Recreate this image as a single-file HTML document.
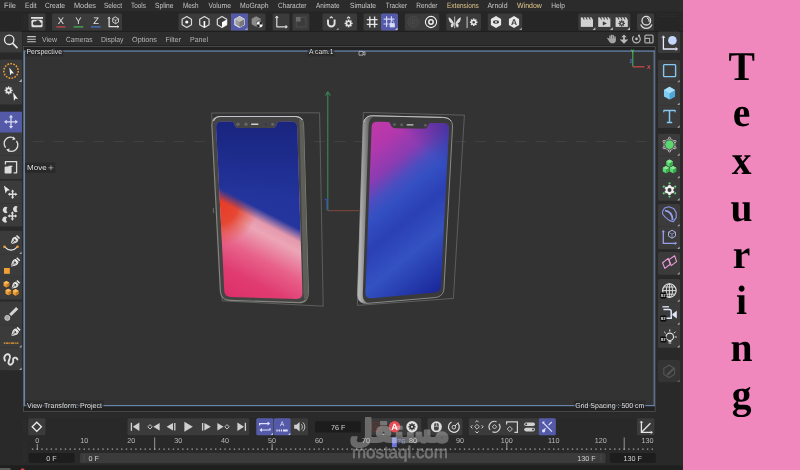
<!DOCTYPE html>
<html><head><meta charset="utf-8"><title>Texuring</title>
<style>
html,body{margin:0;padding:0;background:#292929;overflow:hidden}
svg{display:block;font-family:"Liberation Sans",sans-serif;will-change:transform;text-rendering:geometricPrecision}
.m{font-size:7.6px;fill:#c6c6c6}
.v{font-size:7.4px;fill:#b4b4b4}
.h{font-size:7.3px;fill:#e2e2e2;stroke:#1c1c1c;stroke-width:1.1px;paint-order:stroke;stroke-linejoin:round}
.t{font-size:7.2px;fill:#b8b8b8;text-anchor:middle}
.f{font-size:7.2px;fill:#d0d0d0;text-anchor:middle}
.xyz{font-size:9.4px;fill:#e6e6e6;text-anchor:middle}
.big{font-family:"Liberation Serif",serif;font-weight:bold;font-size:41px;fill:#000;text-anchor:middle}
.s{fill:none;stroke:#dcdcdc;stroke-width:1.2;stroke-linecap:round;stroke-linejoin:round}
</style></head><body>
<svg width="800" height="470" viewBox="0 0 800 470">
<!-- base -->
<rect x="0" y="0" width="683" height="470" fill="#292929"/>
<rect x="0" y="0" width="683" height="11.5" fill="#2b2b2b"/>
<rect x="0" y="11.5" width="683" height="19.6" fill="#262626"/>
<rect x="0" y="31" width="683" height="1" fill="#1f1f1f"/>
<rect x="683" y="0" width="117" height="470" fill="#f088be"/>
<g class="m">
<text x="4" y="7.6" textLength="12" lengthAdjust="spacingAndGlyphs">File</text>
<text x="25" y="7.6" textLength="11.5" lengthAdjust="spacingAndGlyphs">Edit</text>
<text x="45" y="7.6" textLength="20" lengthAdjust="spacingAndGlyphs">Create</text>
<text x="74" y="7.6" textLength="22" lengthAdjust="spacingAndGlyphs">Modes</text>
<text x="104" y="7.6" textLength="18" lengthAdjust="spacingAndGlyphs">Select</text>
<text x="131" y="7.6" textLength="15" lengthAdjust="spacingAndGlyphs">Tools</text>
<text x="155" y="7.6" textLength="18.5" lengthAdjust="spacingAndGlyphs">Spline</text>
<text x="183" y="7.6" textLength="15.5" lengthAdjust="spacingAndGlyphs">Mesh</text>
<text x="208.5" y="7.6" textLength="22.5" lengthAdjust="spacingAndGlyphs">Volume</text>
<text x="240" y="7.6" textLength="28.5" lengthAdjust="spacingAndGlyphs">MoGraph</text>
<text x="278" y="7.6" textLength="28.5" lengthAdjust="spacingAndGlyphs">Character</text>
<text x="316" y="7.6" textLength="23.5" lengthAdjust="spacingAndGlyphs">Animate</text>
<text x="350" y="7.6" textLength="26" lengthAdjust="spacingAndGlyphs">Simulate</text>
<text x="385.8" y="7.6" textLength="21.2" lengthAdjust="spacingAndGlyphs">Tracker</text>
<text x="416.3" y="7.6" textLength="21.2" lengthAdjust="spacingAndGlyphs">Render</text>
<text x="447" y="7.6" textLength="31.8" lengthAdjust="spacingAndGlyphs" fill="#e3c68c">Extensions</text>
<text x="487.5" y="7.6" textLength="20" lengthAdjust="spacingAndGlyphs">Arnold</text>
<text x="517" y="7.6" textLength="24.8" lengthAdjust="spacingAndGlyphs" fill="#e3c68c">Window</text>
<text x="551.3" y="7.6" textLength="13.7" lengthAdjust="spacingAndGlyphs">Help</text>
</g>
<!-- toolbar -->
<path d="M22.5 14V30" stroke="#333" stroke-width="0.8" stroke-dasharray="0.8 0.8"/>
<path d="M24.5 14V30" stroke="#333" stroke-width="0.8" stroke-dasharray="0.8 0.8"/>
<path d="M26.5 14V30" stroke="#333" stroke-width="0.8" stroke-dasharray="0.8 0.8"/>
<rect x="28.3" y="13.5" width="17.2" height="17" fill="#3b3b3b" rx="1.5"/>
<rect x="52" y="13.5" width="70" height="17" fill="#3b3b3b" rx="1.5"/>
<rect x="178.5" y="13.5" width="87" height="17" fill="#3b3b3b" rx="1.5"/>
<rect x="231" y="13.5" width="17" height="17" fill="#545aa8"/>
<rect x="272.6" y="13.5" width="16.9" height="17" fill="#3b3b3b" rx="1.5"/>
<rect x="292.5" y="13.5" width="16.8" height="17" fill="#3b3b3b" rx="1.5"/>
<rect x="322.5" y="13.5" width="34.5" height="17" fill="#3b3b3b" rx="1.5"/>
<rect x="363.5" y="13.5" width="34.5" height="17" fill="#3b3b3b" rx="1.5"/>
<rect x="381" y="13.5" width="17" height="17" fill="#545aa8" rx="1.5"/>
<rect x="404.8" y="13.5" width="34.5" height="17" fill="#3b3b3b" rx="1.5"/>
<rect x="446.2" y="13.5" width="34.8" height="17" fill="#3b3b3b" rx="1.5"/>
<rect x="487.7" y="13.5" width="34.6" height="17" fill="#3b3b3b" rx="1.5"/>
<rect x="578.3" y="13.5" width="52.1" height="17" fill="#3b3b3b" rx="1.5"/>
<rect x="637" y="13.5" width="17" height="17" fill="#3b3b3b" rx="1.5"/>
<path d="M659 14.5H678" stroke="#333" stroke-width="0.8" stroke-dasharray="0.8 0.8"/>
<path d="M659 16.5H678" stroke="#333" stroke-width="0.8" stroke-dasharray="0.8 0.8"/>
<g transform="translate(37 22)"><rect x="-6" y="-5" width="12" height="1.8" fill="#e0e0e0"/><rect x="-5.6" y="-2.2" width="11.2" height="7.4" rx="1.5" fill="#e0e0e0"/><path d="M-3 3.2h6a1.5 1.5 0 0 0 0-3a2.2 2.2 0 0 0-4.2-.6a1.8 1.8 0 0 0-1.8 3.6z" fill="#3b3b3b"/></g>
<g class="xyz"><text x="61" y="24.2">X</text><text x="78.5" y="24.2">Y</text><text x="96" y="24.2">Z</text></g>
<rect x="56.3" y="26.3" width="9.2" height="1.2" fill="#cc4a4c"/>
<rect x="73.6" y="26.3" width="9.6" height="1.2" fill="#4ab45e"/>
<rect x="91" y="26.3" width="9.8" height="1.2" fill="#4a74d4"/>
<g class="s"><path d="M109.100 17.400V26.700H118.300" stroke-width="1.300"/><path d="M108.100 18.300L109.100 17L110.100 18.300M117.500 25.700L118.800 26.700L117.500 27.700" stroke-width="0.700"/><polygon points="115.60,17.10 118.46,18.75 118.46,22.05 115.60,23.70 112.74,22.05 112.74,18.75" stroke-width="0.900"/><path d="M115.600 20.400V23.700M115.600 20.400L112.800 18.800M115.600 20.400L118.400 18.800" stroke-width="0.600"/></g>
<polygon points="186.80,16.60 191.48,19.30 191.48,24.70 186.80,27.40 182.12,24.70 182.12,19.30" class="s" stroke-width="1.1"/><circle cx="186.8" cy="22" r="1.6" fill="#fff"/>
<polygon points="204.40,16.60 209.08,19.30 209.08,24.70 204.40,27.40 199.72,24.70 199.72,19.30" class="s" stroke-width="1.1"/><path d="M204.4 21V27.2" stroke="#fff" stroke-width="1.6"/>
<polygon points="222.00,16.60 226.68,19.30 226.68,24.70 222.00,27.40 217.32,24.70 217.32,19.30" class="s" stroke-width="1.1"/><path d="M222 22.2L226.7 19.5V24.7L222 27.4Z" fill="#fff"/>
<polygon points="239.50,16.60 244.18,19.30 244.18,24.70 239.50,27.40 234.82,24.70 234.82,19.30" fill="#9a9a9a" stroke="#e8e8f4" stroke-width="1.1"/><path d="M239.5 22L244.18 19.3V24.7L239.5 27.4Z" fill="#777"/><path d="M239.5 22L234.82 19.3L239.5 16.6L244.18 19.3Z" fill="#bcbcbc"/>
<polygon points="256.20,16.20 260.79,18.85 260.79,24.15 256.20,26.80 251.61,24.15 251.61,18.85" fill="#8a8a8a"/><path d="M256.2 21.5L260.8 18.9V24.1L256.2 26.8Z" fill="#666"/><circle cx="259.6" cy="24.4" r="3" fill="#fff"/><path d="M259.6 24.4V21.4A3 3 0 0 1 262.6 24.4ZM259.6 24.4V27.4A3 3 0 0 1 256.6 24.4Z" fill="#222"/>
<path d="M247.5 27.4V30H244.9Z" fill="#aaa"/>
<path d="M276.800 16.800V26.800H286.400" class="s" stroke-width="1.500"/><path d="M275.800 17.600L276.800 16.400L277.800 17.600M285.800 25.800L287 26.800L285.800 27.800" class="s" stroke-width="0.700"/>
<rect x="296.3" y="17.3" width="9.6" height="9.6" fill="none" stroke="#4a4a4a" stroke-width="1.3"/><rect x="296" y="17" width="4.6" height="4.6" fill="#6a6a6a"/>
<path d="M328 19.5V23.2A3.3 3.3 0 0 0 334.6 23.2V19.5" fill="none" stroke="#e4e4e4" stroke-width="1.9"/><path d="M330.100 17.900L331.300 16.800L332.500 17.900" class="s" stroke-width="0.900"/>
<path d="M338.5 27.8V30H336.3Z" fill="#aaa"/>
<g transform="translate(348.6 23.4)"><rect x="-0.75" y="-4.0" width="1.5" height="2.4" fill="#e4e4e4" transform="rotate(0.0)"/><rect x="-0.75" y="-4.0" width="1.5" height="2.4" fill="#e4e4e4" transform="rotate(45.0)"/><rect x="-0.75" y="-4.0" width="1.5" height="2.4" fill="#e4e4e4" transform="rotate(90.0)"/><rect x="-0.75" y="-4.0" width="1.5" height="2.4" fill="#e4e4e4" transform="rotate(135.0)"/><rect x="-0.75" y="-4.0" width="1.5" height="2.4" fill="#e4e4e4" transform="rotate(180.0)"/><rect x="-0.75" y="-4.0" width="1.5" height="2.4" fill="#e4e4e4" transform="rotate(225.0)"/><rect x="-0.75" y="-4.0" width="1.5" height="2.4" fill="#e4e4e4" transform="rotate(270.0)"/><rect x="-0.75" y="-4.0" width="1.5" height="2.4" fill="#e4e4e4" transform="rotate(315.0)"/><circle r="2.9" fill="#e4e4e4"/><circle r="1.3" fill="#3b3b3b"/></g>
<path d="M347.400 18L348.600 16.900L349.800 18" class="s" stroke-width="0.900"/>
<path d="M369.8 16.6V27.4M374.59999999999997 16.6V27.4M366.8 19.6H377.59999999999997M366.8 24.4H377.59999999999997" stroke="#e4e4e4" stroke-width="1.4" fill="none"/>
<path d="M386.6 16.200000000000003V27.0M391.4 16.200000000000003V27.0M383.6 19.200000000000003H394.4M383.6 24.0H394.4" stroke="#d0d4f4" stroke-width="1.2" fill="none"/>
<rect x="389.6" y="23.2" width="5.2" height="4.2" rx=".6" fill="#d8dcf8"/><path d="M390.7 23.4V22.3A1.5 1.5 0 0 1 393.7 22.3V23.4" fill="none" stroke="#d8dcf8" stroke-width=".9"/><rect x="388.8" y="22" width="6.8" height="6" fill="none" stroke="#545aa8" stroke-width=".6"/>
<path d="M397.5 27.6V30H395.1Z" fill="#c8c8e0"/>
<g fill="none" stroke="#4c4c4c"><circle cx="413.5" cy="22" r="5.6" stroke-width=".9"/><circle cx="413.5" cy="22" r="3.7" stroke-width=".9"/><circle cx="413.5" cy="22" r="1.6" stroke-width="1.1"/></g>
<circle cx="431" cy="22" r="5.6" fill="none" stroke="#f0f0f0" stroke-width="1.1"/><circle cx="431" cy="22" r="2.200" fill="none" stroke="#f0f0f0" stroke-width="1.500"/>
<g fill="#dedede"><path d="M453.9 23.2C452.5 20 450.5 17.6 448.6 17.2C448.4 20.2 449.6 22.6 452 23.6C450.4 24.4 450.2 26.6 451.8 27.6C453.2 26.8 453.9 25.2 453.9 23.2Z"/><path d="M455.5 23.2C456.9 20 458.9 17.6 460.8 17.2C461 20.2 459.8 22.6 457.4 23.6C459 24.4 459.2 26.6 457.6 27.6C456.2 26.8 455.5 25.2 455.5 23.2Z"/><rect x="454.35" y="16.5" width=".8" height="11.5"/></g>
<rect x="466.6" y="16.6" width="1" height="11.4" fill="#cfcfcf"/>
<g transform="translate(473.7 22.2)"><rect x="-0.75" y="-3.8000000000000003" width="1.5" height="2.4" fill="#e4e4e4" transform="rotate(0.0)"/><rect x="-0.75" y="-3.8000000000000003" width="1.5" height="2.4" fill="#e4e4e4" transform="rotate(45.0)"/><rect x="-0.75" y="-3.8000000000000003" width="1.5" height="2.4" fill="#e4e4e4" transform="rotate(90.0)"/><rect x="-0.75" y="-3.8000000000000003" width="1.5" height="2.4" fill="#e4e4e4" transform="rotate(135.0)"/><rect x="-0.75" y="-3.8000000000000003" width="1.5" height="2.4" fill="#e4e4e4" transform="rotate(180.0)"/><rect x="-0.75" y="-3.8000000000000003" width="1.5" height="2.4" fill="#e4e4e4" transform="rotate(225.0)"/><rect x="-0.75" y="-3.8000000000000003" width="1.5" height="2.4" fill="#e4e4e4" transform="rotate(270.0)"/><rect x="-0.75" y="-3.8000000000000003" width="1.5" height="2.4" fill="#e4e4e4" transform="rotate(315.0)"/><circle r="2.7" fill="#e4e4e4"/><circle r="1.2" fill="#3b3b3b"/></g>
<polygon points="496.00,16.10 501.11,19.05 501.11,24.95 496.00,27.90 490.89,24.95 490.89,19.05" fill="#e8e8e8"/><ellipse cx="496" cy="22" rx="3" ry="1.7" fill="#3b3b3b"/><circle cx="496" cy="22" r=".9" fill="#e8e8e8"/>
<polygon points="514.00,16.10 519.11,19.05 519.11,24.95 514.00,27.90 508.89,24.95 508.89,19.05" fill="#e8e8e8"/><text x="514" y="25" font-size="8.4" font-weight="bold" text-anchor="middle" fill="#3b3b3b">A</text>
<path d="M521.8 27.6V30H519.4Z" fill="#aaa"/>
<g transform="translate(580.8 0)"><path d="M0 17.300H12.200V26.900H0Z" fill="#d2d2d2"/><path d="M1.600 17.100L2.900 19.500H4L2.700 17.100ZM4.600 17.100L5.900 19.500H7L5.700 17.100ZM7.600 17.100L8.900 19.500H10L8.700 17.100ZM10.600 17.100L11.900 19.500H12.400V17.100Z" fill="#3b3b3b"/></g>
<g transform="translate(598.2 0)"><path d="M0 17.300H12.200V26.900H0Z" fill="#d2d2d2"/><path d="M1.600 17.100L2.900 19.500H4L2.700 17.100ZM4.600 17.100L5.900 19.500H7L5.700 17.100ZM7.600 17.100L8.900 19.500H10L8.700 17.100ZM10.600 17.100L11.900 19.500H12.400V17.100Z" fill="#3b3b3b"/></g>
<g transform="translate(615.6 0)"><path d="M0 17.300H12.200V26.900H0Z" fill="#d2d2d2"/><path d="M1.600 17.100L2.900 19.500H4L2.700 17.100ZM4.600 17.100L5.900 19.500H7L5.700 17.100ZM7.600 17.100L8.900 19.500H10L8.700 17.100ZM10.600 17.100L11.900 19.500H12.400V17.100Z" fill="#3b3b3b"/></g>
<path d="M602.800 21.200V25.600L606.800 23.400Z" fill="#3b3b3b"/>
<g transform="translate(621.7 23.4)"><rect x="-0.6" y="-3.2" width="1.2" height="2.4" fill="#3b3b3b" transform="rotate(0.0)"/><rect x="-0.6" y="-3.2" width="1.2" height="2.4" fill="#3b3b3b" transform="rotate(45.0)"/><rect x="-0.6" y="-3.2" width="1.2" height="2.4" fill="#3b3b3b" transform="rotate(90.0)"/><rect x="-0.6" y="-3.2" width="1.2" height="2.4" fill="#3b3b3b" transform="rotate(135.0)"/><rect x="-0.6" y="-3.2" width="1.2" height="2.4" fill="#3b3b3b" transform="rotate(180.0)"/><rect x="-0.6" y="-3.2" width="1.2" height="2.4" fill="#3b3b3b" transform="rotate(225.0)"/><rect x="-0.6" y="-3.2" width="1.2" height="2.4" fill="#3b3b3b" transform="rotate(270.0)"/><rect x="-0.6" y="-3.2" width="1.2" height="2.4" fill="#3b3b3b" transform="rotate(315.0)"/><circle r="2.1" fill="#3b3b3b"/><circle r="1" fill="#d2d2d2"/></g>
<path d="M595.4 27.2V30H592.6Z" fill="#c0c0c0"/>
<path d="M612.8 27.2V30H610Z" fill="#c0c0c0"/>
<path d="M630 27.2V30H627.2Z" fill="#c0c0c0"/>
<circle cx="646.300" cy="20.700" r="4.300" fill="none" stroke="#dcdcdc" stroke-width="1.300"/><path d="M646.800 17.900A2.700 2.700 0 0 1 649 21.700A3.600 3.600 0 0 0 646.800 17.900Z" fill="#f0f0f0" stroke="#f0f0f0" stroke-width=".6"/><path d="M640.700 24.600A6 6 0 0 0 651.900 24.600" fill="none" stroke="#dcdcdc" stroke-width="1.300"/>
<!-- viewmenu -->
<rect x="23" y="32" width="632.5" height="13.2" fill="#2d2d2d"/>
<rect x="23" y="45.2" width="632.5" height="1" fill="#1e1e1e"/>
<path d="M27.2 36.6H35.8M27.2 39.2H35.8M27.2 41.8H35.8" stroke="#c8c8c8" stroke-width="1.1"/>
<g class="v">
<text x="42" y="41.8" textLength="15" lengthAdjust="spacingAndGlyphs">View</text>
<text x="66" y="41.8" textLength="26.5" lengthAdjust="spacingAndGlyphs">Cameras</text>
<text x="101" y="41.8" textLength="22.5" lengthAdjust="spacingAndGlyphs">Display</text>
<text x="132" y="41.8" textLength="25" lengthAdjust="spacingAndGlyphs">Options</text>
<text x="165.5" y="41.8" textLength="15.5" lengthAdjust="spacingAndGlyphs">Filter</text>
<text x="190" y="41.8" textLength="18" lengthAdjust="spacingAndGlyphs">Panel</text>
</g>
<g fill="#a4a4a4"><rect x="609.300" y="35.300" width="1.500" height="5" rx=".75"/><rect x="611" y="34.500" width="1.500" height="5.500" rx=".75"/><rect x="612.700" y="35" width="1.500" height="5" rx=".75"/><rect x="614.400" y="36.200" width="1.400" height="4.500" rx=".7"/><path d="M609.300 38.500H615.800V40.400C615.800 42.200 614.400 43.300 612.600 43.300C611 43.300 610 42.600 609.200 41.400L607.200 38.600C606.900 38 607.600 37.300 608.300 37.900L609.300 39Z"/></g>
<path d="M624 34.400L626.700 37.300H624.900V39.400H628.300L624 43.700L619.700 39.400H623.100V37.300H621.300Z" fill="#b8b8b8"/>
<path d="M633.700 36.200A3.900 3.900 0 1 0 638.400 35.700" fill="none" stroke="#b4b4b4" stroke-width="1.200"/><circle cx="636.500" cy="38.900" r="1.300" fill="#c0c0c0"/><circle cx="639" cy="35.500" r="1" fill="#c0c0c0"/>
<rect x="644.900" y="35.100" width="8.100" height="7.800" rx="1.200" fill="none" stroke="#a8a8a8" stroke-width="1.300"/><path d="M645 38.400H649.600V43" fill="none" stroke="#a8a8a8" stroke-width="1.100"/>
<!-- leftbar -->
<rect x="0" y="31.5" width="22" height="21" fill="#3b3b3b" rx="1.2"/>
<rect x="0" y="59.5" width="22" height="45" fill="#3b3b3b" rx="1.2"/>
<rect x="0" y="111.7" width="22" height="67.3" fill="#3b3b3b" rx="1.2"/>
<rect x="0" y="111.7" width="22" height="20.8" fill="#545aa8"/>
<rect x="0" y="180.5" width="22" height="46" fill="#3b3b3b" rx="1.2"/>
<rect x="0" y="230.7" width="22" height="68.9" fill="#3b3b3b" rx="1.2"/>
<rect x="0" y="301.6" width="22" height="68.6" fill="#3b3b3b" rx="1.2"/>
<rect x="0" y="81.7" width="22" height="0.6" fill="#343434"/>
<rect x="0" y="155.2" width="22" height="0.6" fill="#343434"/>
<rect x="0" y="203.2" width="22" height="0.6" fill="#343434"/>
<rect x="0" y="253.7" width="22" height="0.6" fill="#343434"/>
<rect x="0" y="276.7" width="22" height="0.6" fill="#343434"/>
<rect x="0" y="324.7" width="22" height="0.6" fill="#343434"/>
<rect x="0" y="347.2" width="22" height="0.6" fill="#343434"/>
<circle cx="9.2" cy="39.8" r="4.7" fill="none" stroke="#e6e6e6" stroke-width="1.3"/><path d="M12.8 43.4L17 47.6" stroke="#e6e6e6" stroke-width="1.7" stroke-linecap="round"/>
<circle cx="11" cy="71" r="7.2" fill="none" stroke="#f2a035" stroke-width="1.5" stroke-dasharray="1.7 1.3"/><path d="M9.300 67.400L14 73.600L11.600 73.200L10.300 75.400Z" fill="#f0f0f0"/>
<path d="M21.8 79V82H18.8Z" fill="#b0b0b0"/>
<g transform="translate(8.6 90.4)"><rect x="-0.75" y="-4.0" width="1.5" height="2.4" fill="#e4e4e4" transform="rotate(0.0)"/><rect x="-0.75" y="-4.0" width="1.5" height="2.4" fill="#e4e4e4" transform="rotate(45.0)"/><rect x="-0.75" y="-4.0" width="1.5" height="2.4" fill="#e4e4e4" transform="rotate(90.0)"/><rect x="-0.75" y="-4.0" width="1.5" height="2.4" fill="#e4e4e4" transform="rotate(135.0)"/><rect x="-0.75" y="-4.0" width="1.5" height="2.4" fill="#e4e4e4" transform="rotate(180.0)"/><rect x="-0.75" y="-4.0" width="1.5" height="2.4" fill="#e4e4e4" transform="rotate(225.0)"/><rect x="-0.75" y="-4.0" width="1.5" height="2.4" fill="#e4e4e4" transform="rotate(270.0)"/><rect x="-0.75" y="-4.0" width="1.5" height="2.4" fill="#e4e4e4" transform="rotate(315.0)"/><circle r="2.9" fill="#e4e4e4"/><circle r="1.2" fill="#3b3b3b"/></g>
<path d="M13.2 92.6L18 99L15.4 98.6L14 101Z" fill="#f0f0f0"/>
<path d="M5.88 121.8H16.12M11 116.68V126.92" stroke="#d4d8f0" stroke-width="1.3" fill="none"/><path d="M8.9 117.6L11 114.8L13.1 117.6ZM8.9 126L11 128.8L13.1 126ZM6.8 119.7L4 121.8L6.8 123.9ZM15.2 119.7L18 121.8L15.2 123.9Z" fill="#d4d8f0"/>
<path d="M5.6 147.6A6.4 6.4 0 0 1 14.6 138.6M16.4 141A6.4 6.4 0 0 1 7.4 150" fill="none" stroke="#dcdcdc" stroke-width="1.3"/><path d="M13.2 136.6L15.8 139.2L12.4 140.2ZM8.8 152L6.2 149.4L9.6 148.4Z" fill="#dcdcdc"/>
<path d="M5.4 164.6V161.6H16.6V172.8H13.6" fill="none" stroke="#dcdcdc" stroke-width="1.3" stroke-linejoin="round"/><rect x="4.6" y="166.6" width="7" height="7" rx="1.2" fill="#dcdcdc"/><path d="M9 169.4V166.4H12.4" fill="none" stroke="#dcdcdc" stroke-width="1.1"/>
<path d="M3.900 185.400L10 190.300L7.100 190.800L5.600 193.500Z" fill="#e8e8e8"/>
<path d="M9.32 194.2H15.88M12.6 190.92V197.48" stroke="#dcdcdc" stroke-width="1.4" fill="none"/><path d="M10.9 191.6L12.6 189.4L14.3 191.6ZM10.9 196.8L12.6 199L14.3 196.8ZM10 192.5L7.8 194.2L10 195.9ZM15.2 192.5L17.4 194.2L15.2 195.9Z" fill="#dcdcdc"/>
<path d="M7.5 207.6A3 3 0 1 0 7.5 212.4A3.2 3.2 0 0 1 7.5 207.6Z" fill="#dcdcdc"/>
<path d="M17.7 206.8A3 3 0 1 0 17.7 211.6A3.2 3.2 0 0 1 17.7 206.8Z" fill="#dcdcdc"/>
<path d="M7.1 217.2A3 3 0 1 0 7.1 222A3.2 3.2 0 0 1 7.1 217.2Z" fill="#dcdcdc"/>
<path d="M9.12 216H15.68M12.4 212.72V219.28" stroke="#dcdcdc" stroke-width="1.4" fill="none"/><path d="M10.7 213.4L12.4 211.2L14.1 213.4ZM10.7 218.6L12.4 220.8L14.1 218.6ZM9.8 214.3L7.6 216L9.8 217.7ZM15 214.3L17.2 216L15 217.7Z" fill="#dcdcdc"/>
<g transform="translate(14.7 240.3) rotate(45) scale(1.0)"><path d="M0 5.4C-1.400 3.400 -3.100 1.400 -3 -.8C-2.900 -2 -2.400 -2.600 -1.900 -3.200H1.900C2.400 -2.600 2.900 -2 3 -.8C3.100 1.400 1.400 3.400 0 5.400Z" fill="#ececec"/><path d="M-2.100 -4.700H2.100" stroke="#ececec" stroke-width="1.500"/><path d="M0 5V.8" stroke="#3b3b3b" stroke-width=".8"/><circle cx="0" cy="-.1" r="1.050" fill="#3b3b3b"/><path d="M-1.700 -1.900C-2 -.2 -1.200 1.700 -.3 3M1.700 -1.900C2 -.2 1.200 1.700 .3 3" stroke="#8a8a8a" stroke-width=".5" fill="none"/></g>
<path d="M4.600 246.800Q11 253.600 17.400 246.800" fill="none" stroke="#e8e8e8" stroke-width="1.200"/><circle cx="4.500" cy="246.800" r="1.300" fill="#f2a035"/><circle cx="17.500" cy="246.800" r="1.300" fill="#f2a035"/>
<path d="M21.6 251.6V254H19.2Z" fill="#aaa"/>
<g transform="translate(14.9 262.6) rotate(45) scale(1.0)"><path d="M0 5.4C-1.400 3.400 -3.100 1.400 -3 -.8C-2.900 -2 -2.400 -2.600 -1.900 -3.200H1.900C2.400 -2.600 2.900 -2 3 -.8C3.100 1.400 1.400 3.400 0 5.400Z" fill="#ececec"/><path d="M-2.100 -4.700H2.100" stroke="#ececec" stroke-width="1.500"/><path d="M0 5V.8" stroke="#3b3b3b" stroke-width=".8"/><circle cx="0" cy="-.1" r="1.050" fill="#3b3b3b"/><path d="M-1.700 -1.900C-2 -.2 -1.200 1.700 -.3 3M1.700 -1.900C2 -.2 1.200 1.700 .3 3" stroke="#8a8a8a" stroke-width=".5" fill="none"/></g>
<rect x="4" y="268" width="5.8" height="5.8" fill="#f2a035"/>
<polygon points="6.40,280.90 9.26,282.55 9.26,285.85 6.40,287.50 3.54,285.85 3.54,282.55" fill="#f2a035"/><path d="M6.4 284.2V287.5L9.26 285.84999999999997V282.55Z" fill="#c87c1c"/><path d="M6.4 284.2L3.54 282.55L6.4 280.9L9.26 282.55Z" fill="#f8bc62"/>
<polygon points="8.30,288.70 11.16,290.35 11.16,293.65 8.30,295.30 5.44,293.65 5.44,290.35" fill="#f2a035"/><path d="M8.3 292V295.3L11.16 293.65V290.35Z" fill="#c87c1c"/><path d="M8.3 292L5.44 290.35L8.3 288.7L11.16 290.35Z" fill="#f8bc62"/>
<polygon points="15.60,289.10 18.46,290.75 18.46,294.05 15.60,295.70 12.74,294.05 12.74,290.75" fill="#f2a035"/><path d="M15.6 292.4V295.7L18.46 294.04999999999995V290.75Z" fill="#c87c1c"/><path d="M15.6 292.4L12.74 290.75L15.6 289.09999999999997L18.46 290.75Z" fill="#f8bc62"/>
<g transform="translate(15.2 285) rotate(45) scale(0.92)"><path d="M0 5.4C-1.400 3.400 -3.100 1.400 -3 -.8C-2.900 -2 -2.400 -2.600 -1.900 -3.200H1.900C2.400 -2.600 2.900 -2 3 -.8C3.100 1.400 1.400 3.400 0 5.400Z" fill="#ececec"/><path d="M-2.100 -4.700H2.100" stroke="#ececec" stroke-width="1.500"/><path d="M0 5V.8" stroke="#3b3b3b" stroke-width=".8"/><circle cx="0" cy="-.1" r="1.050" fill="#3b3b3b"/><path d="M-1.700 -1.900C-2 -.2 -1.200 1.700 -.3 3M1.700 -1.900C2 -.2 1.200 1.700 .3 3" stroke="#8a8a8a" stroke-width=".5" fill="none"/></g>
<path d="M17.200 308.200L10.200 315" stroke="#d4d4d4" stroke-width="3.100" stroke-linecap="butt"/><circle cx="7.300" cy="317.900" r="2.500" fill="#a8a8a8" stroke="#d0d0d0" stroke-width=".9"/>
<g transform="translate(15.2 332.2) rotate(45) scale(1.0)"><path d="M0 5.4C-1.400 3.400 -3.100 1.400 -3 -.8C-2.900 -2 -2.400 -2.600 -1.900 -3.200H1.900C2.400 -2.600 2.900 -2 3 -.8C3.100 1.400 1.400 3.400 0 5.400Z" fill="#ececec"/><path d="M-2.100 -4.700H2.100" stroke="#ececec" stroke-width="1.500"/><path d="M0 5V.8" stroke="#3b3b3b" stroke-width=".8"/><circle cx="0" cy="-.1" r="1.050" fill="#3b3b3b"/><path d="M-1.700 -1.900C-2 -.2 -1.200 1.700 -.3 3M1.700 -1.900C2 -.2 1.200 1.700 .3 3" stroke="#8a8a8a" stroke-width=".5" fill="none"/></g>
<path d="M3.800 343.100H18.400" stroke="#f2a035" stroke-width="1.300" stroke-dasharray="1.2 .6 3 .6"/>
<path d="M21.6 345.1V347.5H19.2Z" fill="#aaa"/>
<path d="M5 360.6C2.6 355.4 8 352.2 9.8 355.6C11.4 358.6 6.6 361.8 9 364C11.400 366 13.8 362.4 13.2 360C12.600 357.400 16.4 356.600 17.4 359.4" fill="none" stroke="#e0e0e0" stroke-width="1.900" stroke-linecap="round"/>
<path d="M21.6 367.6V370H19.2Z" fill="#aaa"/>
<!-- viewport -->
<rect x="23" y="46" width="632.5" height="365.8" fill="#222222"/>
<rect x="23.4" y="46.4" width="631.8" height="365" fill="none" stroke="#4e4e50" stroke-width=".9"/>
<rect x="23.1" y="50.4" width="1" height="355.8" fill="#5c6874"/>
<rect x="24" y="50.4" width="631" height="355.8" fill="#6785ab"/>
<rect x="653.6" y="51.8" width="1.4" height="353.2" fill="#5c6f88"/>
<rect x="25.1" y="51.7" width="628.5" height="353.3" fill="#333333"/>
<path d="M32.800 141.600H652" stroke="#434343" stroke-width="1" stroke-dasharray="11.300 8.800"/>
<defs><linearGradient id="g1" gradientUnits="userSpaceOnUse" x1="277.900" y1="176.500" x2="213.500" y2="300.800"><stop offset="0" stop-color="#e49aac"/><stop offset=".34" stop-color="#e498ac"/><stop offset=".41" stop-color="#eca6b6"/><stop offset=".47" stop-color="#ea8ea8"/><stop offset=".58" stop-color="#e8628a"/><stop offset=".75" stop-color="#e03c72"/><stop offset="1" stop-color="#dc2a66"/></linearGradient><radialGradient id="g1r" gradientUnits="userSpaceOnUse" cx="217" cy="204" r="42"><stop offset="0" stop-color="#e83a26"/><stop offset=".5" stop-color="#e6422c" stop-opacity=".95"/><stop offset="1" stop-color="#e4503a" stop-opacity="0"/></radialGradient><linearGradient id="g1b" gradientUnits="userSpaceOnUse" x1="277.900" y1="176.500" x2="213.500" y2="300.800"><stop offset="0" stop-color="#22349c"/><stop offset=".265" stop-color="#24369e"/><stop offset=".345" stop-color="#2a3aa0" stop-opacity="0"/></linearGradient><linearGradient id="g1t" gradientUnits="userSpaceOnUse" x1="0" y1="120" x2="0" y2="200"><stop offset="0" stop-color="#161f74" stop-opacity=".75"/><stop offset="1" stop-color="#161f74" stop-opacity="0"/></linearGradient><linearGradient id="g2" gradientUnits="userSpaceOnUse" x1="365" y1="115" x2="478.800" y2="254.500"><stop offset="0" stop-color="#c63aa6"/><stop offset=".18" stop-color="#b238ac"/><stop offset=".31" stop-color="#8a3cb2"/><stop offset=".4" stop-color="#4a4ec0"/><stop offset=".47" stop-color="#3450c2"/><stop offset=".6" stop-color="#2a40b4"/><stop offset=".76" stop-color="#3452c2"/><stop offset=".93" stop-color="#2236a8"/><stop offset="1" stop-color="#1c2a9e"/></linearGradient><linearGradient id="g2c" gradientUnits="userSpaceOnUse" x1="452" y1="118" x2="425" y2="150"><stop offset="0" stop-color="#3a2c98" stop-opacity=".9"/><stop offset="1" stop-color="#3a2c98" stop-opacity="0"/></linearGradient><linearGradient id="g2s" gradientUnits="userSpaceOnUse" x1="360" y1="0" x2="370" y2="0"><stop offset="0" stop-color="#b4b4b4"/><stop offset=".45" stop-color="#8e8e8e"/><stop offset="1" stop-color="#5c5c5c"/></linearGradient><clipPath id="c1"><path d="M221.500 121.700H231.500C233.200 121.700 233.600 122.400 234.200 124.400C235.200 127.200 236.600 128 239.500 128H271.500C274.400 128 275.800 127.200 276.800 124.400C277.400 122.400 277.800 121.700 279.500 121.700H291.500C295.300 121.700 297.100 123.500 297.200 127.500L302.400 292.500C302.500 296.800 300.600 299.100 296.600 299L231 296.900C227 296.800 224.600 295 224.300 291L216.200 127.500C216 123.500 217.800 121.700 221.500 121.700Z"/></clipPath><clipPath id="c2"><path d="M377.500 121.800L388 122C389.600 122 390 122.800 390.600 124.600C391.500 127.300 392.800 128.100 395.600 128.200L423 128.800C425.800 128.900 427.200 128.100 428.300 125.500C429 123.700 429.400 123 431 123L443.500 123.300C447.300 123.400 449.100 125.200 448.900 129L440.900 286C440.700 290 438.800 292 434.800 292.400L371.400 298.300C367.400 298.700 365.300 296.800 365.400 292.800L371.600 127.400C371.800 123.400 373.600 121.700 377.500 121.800Z"/></clipPath></defs>
<path d="M327.800 210.600V92" stroke="#3c9058" stroke-width="1"/><path d="M325.300 95.600L327.800 91.600L330.300 95.600" fill="none" stroke="#3c9058" stroke-width="1"/>
<path d="M327.800 210.700H359" stroke="#84483e" stroke-width="1"/><path d="M326.800 199.600V210M324.800 199.600H328.400" stroke="#3650b4" stroke-width="1.100"/>
<path d="M437 211.200H446.500" stroke="#8a4840" stroke-width="1"/><path d="M213.400 208V213" stroke="#777" stroke-width=".8"/>
<path d="M211.600 113L319.600 112.800L323.200 306.200L222.200 300.800Z" fill="none" stroke="#686868" stroke-width=".8"/>
<path d="M220.500 116.500H295C300.600 116.500 303.300 119.200 303.500 125L308.300 292C308.500 299 305.300 302.800 298.900 302.600L230 300.400C224 300.200 220.800 297.400 220.400 291.200L211.900 126C211.500 119.800 214.500 116.500 220.500 116.500Z" fill="#444444" stroke="#85857e" stroke-width="1.200"/>
<path d="M302.400 120C303.200 121.400 303.450 123 303.500 125L308.300 292C308.400 296 307.400 299 305.200 300.800C303.800 299 303.600 296 303.500 292L299.600 125C299.550 123 299.400 121.400 298.800 119.600Z" fill="#5e5e58"/>
<path d="M213.500 121C214.500 118 217 116.600 220.500 116.500H295C298.500 116.600 301 117.600 302.400 120" fill="none" stroke="#c4c4cc" stroke-width="1.100"/>
<g clip-path="url(#c1)"><rect x="210" y="115" width="100" height="190" fill="url(#g1)"/><rect x="210" y="160" width="100" height="100" fill="url(#g1r)"/><rect x="210" y="115" width="100" height="190" fill="url(#g1b)"/><rect x="210" y="115" width="100" height="90" fill="url(#g1t)"/></g>
<g fill="#666668"><circle cx="238" cy="124.200" r="1.700"/><circle cx="246" cy="124.200" r="1.700"/><circle cx="272.600" cy="124.200" r="1.500"/><circle cx="266" cy="124.200" r="1" fill="#26347a"/><rect x="251" y="123.600" width="7.500" height="1.300" rx=".6" fill="#d0d0d0"/></g>
<path d="M363.400 112.400L464.400 115.200L453.400 298.400L357.400 305.400Z" fill="none" stroke="#686868" stroke-width=".8"/>
<path d="M373 115.800L442.500 117.400C449 117.600 452.800 120.600 452.500 127L444 288C443.700 294 440.600 297 434.600 297.600L368 303.300C361 303.900 357.400 300.800 357.600 294L363.200 125.500C363.400 119 366.500 115.600 373 115.800Z" fill="#3a3a3a" stroke="#8a8a86" stroke-width="1"/>
<path d="M373 115.800C366.500 115.600 363.400 119 363.200 125.500L357.600 294C357.400 300.800 361 303.900 368 303.300L370 303.100C365 302.600 362.600 299.600 362.800 294L368.600 127C368.800 121.400 370.400 118 375 115.850Z" fill="url(#g2s)"/>
<path d="M363.800 122C364.800 118 367.500 115.700 373 115.800L442.500 117.400C446.500 117.500 449.500 118.600 451.200 121" fill="none" stroke="#c0c0c4" stroke-width="1"/>
<g clip-path="url(#c2)"><rect x="355" y="112" width="100" height="195" fill="url(#g2)"/><rect x="355" y="112" width="100" height="195" fill="url(#g2c)"/></g>
<g fill="#5e5e64"><circle cx="394.400" cy="124.600" r="1.500"/><circle cx="401.600" cy="124.800" r="1.500"/><circle cx="425.400" cy="125.300" r="1.400"/><circle cx="419.600" cy="125.200" r=".9" fill="#26347a"/><rect x="406.600" y="124.300" width="7" height="1.300" rx=".6" fill="#c8c8c8"/></g>
<path d="M632.800 50.400V66.600" stroke="#4cae5c" stroke-width="1.1"/><path d="M632.800 66.800H644.400" stroke="#c8484a" stroke-width="1.300"/>
<text x="630.800" y="53.400" font-size="5" fill="#56c868" font-weight="bold">Y</text><text x="629.600" y="63.400" font-size="5" fill="#4a70e0" font-weight="bold">Z</text><text x="647" y="69" font-size="5.4" fill="#e05050" font-weight="bold">X</text>
<rect x="25.2" y="162.6" width="30" height="10.4" fill="#2a2a2a"/>
<g fill="#262626" fill-opacity=".55"><rect x="25.500" y="48.600" width="38" height="7.800"/><rect x="307.500" y="48.600" width="27" height="7.800"/><rect x="25.500" y="400.600" width="78.500" height="8"/><rect x="574" y="400.600" width="71.500" height="8"/></g>
<g class="h"><text x="26.500" y="54" textLength="35.400" lengthAdjust="spacingAndGlyphs">Perspective</text><text x="309" y="53.800" textLength="24.400" lengthAdjust="spacingAndGlyphs">A cam.1</text><text x="27" y="170.400" textLength="19.600" lengthAdjust="spacingAndGlyphs">Move</text><text x="27" y="407.600" textLength="75" lengthAdjust="spacingAndGlyphs">View Transform: Project</text><text x="575.200" y="407.600" textLength="69.200" lengthAdjust="spacingAndGlyphs">Grid Spacing : 500 cm</text></g>
<path d="M48.400 167.800H53.400M50.900 165.300V170.300" stroke="#bbb" stroke-width=".7"/>
<path d="M359 51.400h4v3.800h-4zM363 52.600l2 -1v3.600l-2 -1" fill="none" stroke="#ccc" stroke-width=".7"/>
<!-- rightbar -->
<rect x="658" y="31.5" width="22" height="21.5" fill="#3b3b3b" rx="1.5"/>
<rect x="658" y="60" width="22" height="68" fill="#3b3b3b" rx="1.5"/>
<rect x="658" y="133.8" width="22" height="67" fill="#3b3b3b" rx="1.5"/>
<rect x="658" y="204" width="22" height="45.3" fill="#3b3b3b" rx="1.5"/>
<rect x="658" y="252" width="22" height="22.8" fill="#3b3b3b" rx="1.5"/>
<rect x="658" y="279" width="22" height="68.7" fill="#3b3b3b" rx="1.5"/>
<rect x="658" y="360" width="22" height="22.3" fill="#343434" rx="1.5"/>
<rect x="658" y="82.3" width="22" height="0.6" fill="#343434"/>
<rect x="658" y="105" width="22" height="0.6" fill="#343434"/>
<rect x="658" y="155.7" width="22" height="0.6" fill="#343434"/>
<rect x="658" y="178.2" width="22" height="0.6" fill="#343434"/>
<rect x="658" y="226.3" width="22" height="0.6" fill="#343434"/>
<rect x="658" y="301.7" width="22" height="0.6" fill="#343434"/>
<rect x="658" y="324.7" width="22" height="0.6" fill="#343434"/>
<path d="M663.400 36.400V49H677" fill="none" stroke="#e8ecff" stroke-width="1.300"/><path d="M662 37.800L663.400 35.800L664.800 37.800M675.600 47.600L677.600 49L675.600 50.400" fill="none" stroke="#e8ecff" stroke-width=".9"/><circle cx="672.400" cy="40.400" r="4.300" fill="#c6d6fc"/>
<rect x="663.600" y="64.600" width="12" height="12" rx=".8" fill="none" stroke="#86c8f2" stroke-width="1.400"/>
<path d="M679.6 79.9V82.3H677.2Z" fill="#aaa"/>
<polygon points="669.50,86.80 675.04,90.00 675.04,96.40 669.50,99.60 663.96,96.40 663.96,90.00" fill="#7ecdf4"/><path d="M669.5 93.200V99.600L675.04 96.400V90Z" fill="#4fa6d4"/><path d="M669.5 93.200L663.96 90L669.5 86.800L675.04 90Z" fill="#a8e0fa"/>
<path d="M679.6 102.6V105H677.2Z" fill="#aaa"/>
<path d="M663.800 110.600H675.200M669.500 110.600V122.400M666.800 122.400H672.200" stroke="#86c8f2" stroke-width="1.500" fill="none"/><path d="M663.800 110V112.400M675.200 110V112.400" stroke="#86c8f2" stroke-width="1"/>
<path d="M679.6 125.3V127.7H677.2Z" fill="#aaa"/>
<circle cx="669.5" cy="144.600" r="4.300" fill="#5cd66e"/><polygon points="669.50,138.30 674.96,141.45 674.96,147.75 669.50,150.90 664.04,147.75 664.04,141.45" fill="none" stroke="#c8c8c8" stroke-width=".7"/>
<circle cx="669.50" cy="138.30" r="1.100" fill="#3b3b3b" stroke="#e0e0e0" stroke-width=".7"/>
<circle cx="674.96" cy="141.45" r="1.100" fill="#3b3b3b" stroke="#e0e0e0" stroke-width=".7"/>
<circle cx="674.96" cy="147.75" r="1.100" fill="#3b3b3b" stroke="#e0e0e0" stroke-width=".7"/>
<circle cx="669.50" cy="150.90" r="1.100" fill="#3b3b3b" stroke="#e0e0e0" stroke-width=".7"/>
<circle cx="664.04" cy="147.75" r="1.100" fill="#3b3b3b" stroke="#e0e0e0" stroke-width=".7"/>
<circle cx="664.04" cy="141.45" r="1.100" fill="#3b3b3b" stroke="#e0e0e0" stroke-width=".7"/>
<path d="M679.6 153.3V155.7H677.2Z" fill="#aaa"/>
<polygon points="669.50,159.50 672.70,161.35 672.70,165.05 669.50,166.90 666.30,165.05 666.30,161.35" fill="#5cd66e"/><path d="M669.5 163.2V166.89999999999998L672.70 165.04999999999998V161.35Z" fill="#38a84c"/><path d="M669.5 163.2L666.30 161.35L669.5 159.5L672.70 161.35Z" fill="#86ea94"/>
<polygon points="666.00,165.90 669.20,167.75 669.20,171.45 666.00,173.30 662.80,171.45 662.80,167.75" fill="#5cd66e"/><path d="M666.0 169.6V173.29999999999998L669.20 171.45V167.75Z" fill="#38a84c"/><path d="M666.0 169.6L662.80 167.75L666.0 165.9L669.20 167.75Z" fill="#86ea94"/>
<polygon points="673.00,165.90 676.20,167.75 676.20,171.45 673.00,173.30 669.80,171.45 669.80,167.75" fill="#5cd66e"/><path d="M673.0 169.6V173.29999999999998L676.20 171.45V167.75Z" fill="#38a84c"/><path d="M673.0 169.6L669.80 167.75L673.0 165.9L676.20 167.75Z" fill="#86ea94"/>
<path d="M679.6 175.8V178.2H677.2Z" fill="#aaa"/>
<g transform="translate(669.5 190)"><rect x="-1.2" y="-5.0" width="2.4" height="2.4" fill="#f0f0f0" transform="rotate(0.0)"/><rect x="-1.2" y="-5.0" width="2.4" height="2.4" fill="#f0f0f0" transform="rotate(60.0)"/><rect x="-1.2" y="-5.0" width="2.4" height="2.4" fill="#f0f0f0" transform="rotate(120.0)"/><rect x="-1.2" y="-5.0" width="2.4" height="2.4" fill="#f0f0f0" transform="rotate(180.0)"/><rect x="-1.2" y="-5.0" width="2.4" height="2.4" fill="#f0f0f0" transform="rotate(240.0)"/><rect x="-1.2" y="-5.0" width="2.4" height="2.4" fill="#f0f0f0" transform="rotate(300.0)"/><circle r="3.9" fill="#f0f0f0"/><circle r="2" fill="#3b3b3b"/></g>
<circle cx="675.22" cy="193.30" r="1.100" fill="#5cd66e"/>
<circle cx="669.50" cy="196.60" r="1.100" fill="#5cd66e"/>
<circle cx="663.78" cy="193.30" r="1.100" fill="#5cd66e"/>
<circle cx="663.78" cy="186.70" r="1.100" fill="#5cd66e"/>
<circle cx="669.50" cy="183.40" r="1.100" fill="#5cd66e"/>
<circle cx="675.22" cy="186.70" r="1.100" fill="#5cd66e"/>
<path d="M679.6 198.1V200.5H677.2Z" fill="#aaa"/>
<path d="M662.600 211.200L664.600 208L669 206.800L673.600 208.400L676.200 212.600L676.200 217.600L673.400 221.600L669.600 220.600L665.400 217.400L662.600 214Z" fill="none" stroke="#8e96ec" stroke-width="1.100" stroke-linejoin="round"/><path d="M665 210.600C669.600 211.200 672.400 214.600 672.600 220" fill="none" stroke="#9aa0f0" stroke-width="1.900"/>
<path d="M679.6 223.9V226.3H677.2Z" fill="#aaa"/>
<path d="M663.300 231V243.300H676" fill="none" stroke="#9a9eec" stroke-width="1.300"/><path d="M662.100 232.200L663.300 230.400L664.500 232.200M674.800 242.100L676.600 243.300L674.800 244.500" fill="none" stroke="#9a9eec" stroke-width=".9"/><polygon points="672.00,230.20 675.46,232.20 675.46,236.20 672.00,238.20 668.54,236.20 668.54,232.20" fill="none" stroke="#b8bcf4" stroke-width=".9"/><path d="M672 234.200V238.200M672 234.200L668.600 232.200M672 234.200L675.400 232.200" stroke="#b8bcf4" stroke-width=".6"/>
<path d="M679.6 246.6V249H677.2Z" fill="#aaa"/>
<path d="M662.600 262.800L668.200 258.400L670.200 264.200L664.800 268.400Z" fill="none" stroke="#ee9cdc" stroke-width="1.100" stroke-linejoin="round"/><path d="M669 259.600L674.600 255.800L676.600 261.600L671.200 265.600Z" fill="none" stroke="#ee9cdc" stroke-width="1.100" stroke-linejoin="round"/>
<path d="M679.6 272.1V274.5H677.2Z" fill="#aaa"/>
<g fill="none" stroke="#e4e4e4" stroke-width=".9"><circle cx="669.400" cy="290.600" r="6.800" stroke-width="1.100"/><ellipse cx="669.400" cy="290.600" rx="3.100" ry="6.800"/><path d="M662.600 290.600H676.200M663.700 287H675.100M663.700 294.200H675.100M669.400 283.800V297.400"/></g>
<rect x="660.4" y="292.4" width="6" height="6.200" rx="1" fill="#0c0c0c"/><text x="663.4" y="297.09999999999997" font-size="4.200" font-weight="bold" fill="#fff" text-anchor="middle">ST</text>
<path d="M679.6 299.3V301.7H677.2Z" fill="#aaa"/>
<path d="M663.400 309.400H669.200C670.600 309.400 671.200 310 671.200 311.200V318.200H664" fill="none" stroke="#e0e6f8" stroke-width="1.500"/><path d="M672.400 314L676.800 310.800V318.400L672.400 315.200Z" fill="#e0e6f8"/><path d="M662.400 306.800H669" stroke="#e0e6f8" stroke-width="1.300"/>
<rect x="660.4" y="315.4" width="6" height="6.200" rx="1" fill="#0c0c0c"/><text x="663.4" y="320.09999999999997" font-size="4.200" font-weight="bold" fill="#fff" text-anchor="middle">ST</text>
<path d="M679.6 322.3V324.7H677.2Z" fill="#aaa"/>
<circle cx="669.800" cy="336.800" r="3.700" fill="none" stroke="#e4e4e4" stroke-width="1.100"/><path d="M669.800 329.800V331.200M664.400 332L665.400 333M675.200 332L674.200 333M676.400 337H675M668.800 341.400H671M669 343H670.800" stroke="#e4e4e4" stroke-width="1" stroke-linecap="round"/>
<rect x="660.4" y="336.4" width="6" height="6.200" rx="1" fill="#0c0c0c"/><text x="663.4" y="341.09999999999997" font-size="4.200" font-weight="bold" fill="#fff" text-anchor="middle">ST</text>
<path d="M679.6 345V347.4H677.2Z" fill="#aaa"/>
<polygon points="669.20,365.20 674.57,368.30 674.57,374.50 669.20,377.60 663.83,374.50 663.83,368.30" fill="none" stroke="#545454" stroke-width="1.100"/><path d="M667 373.800L673.400 367.400L674.800 368.800L668.400 375.200L666.600 375.600Z" fill="#545454"/>
<path d="M679.6 379.6V382H677.2Z" fill="#666"/>
<!-- timeline -->
<path d="M28 414.400H652M28 416.200H652" stroke="#333" stroke-width=".8" stroke-dasharray=".8 .8"/>
<path d="M23.8 420V434.500M23.8 443V462" stroke="#363636" stroke-width=".8" stroke-dasharray=".8 .8"/>
<path d="M25.6 420V434.500M25.6 443V462" stroke="#363636" stroke-width=".8" stroke-dasharray=".8 .8"/>
<rect x="28.2" y="418.3" width="17.3" height="16.9" fill="#3b3b3b" rx="1.5"/>
<rect x="127.5" y="418.3" width="121.8" height="16.9" fill="#3b3b3b" rx="1.5"/>
<rect x="256.3" y="418.3" width="51.7" height="16.9" fill="#3b3b3b" rx="1.5"/>
<rect x="256.3" y="418.3" width="17" height="16.9" fill="#545aa8" rx="1.5"/>
<rect x="273.9" y="418.3" width="16.7" height="16.9" fill="#545aa8" rx="1.5"/>
<rect x="370.8" y="418.3" width="50.5" height="16.9" fill="#3b3b3b" rx="1.5"/>
<rect x="427.5" y="418.3" width="35" height="16.9" fill="#3b3b3b" rx="1.5"/>
<rect x="468.8" y="418.3" width="87" height="16.9" fill="#3b3b3b" rx="1.5"/>
<rect x="538.8" y="418.3" width="17" height="16.9" fill="#545aa8" rx="1.5"/>
<rect x="637" y="418.3" width="17.5" height="16.9" fill="#3b3b3b" rx="1.5"/>
<path d="M36.800 422.200L41.400 426.800L36.800 431.400L32.200 426.800Z" fill="none" stroke="#f0f0f0" stroke-width="1.300"/>
<path d="M131.400 422.800V430.800" stroke="#d0d0d0" stroke-width="1.300"/><path d="M139.400 422.600V431L132.800 426.800Z" fill="#d0d0d0"/>
<path d="M150 424.600L152.200 426.800L150 429L147.800 426.800Z" fill="none" stroke="#d0d0d0" stroke-width=".9"/><path d="M159.600 423V430.600L153.400 426.800Z" fill="#d0d0d0"/>
<path d="M173 423V430.600L166.600 426.800Z" fill="#d0d0d0"/><path d="M174.800 423V430.600" stroke="#d0d0d0" stroke-width="1.300"/>
<path d="M184.400 421.800V431.800L192.800 426.800Z" fill="#d0d0d0"/>
<path d="M202.600 423V430.600" stroke="#d0d0d0" stroke-width="1.300"/><path d="M204.400 423V430.600L210.800 426.800Z" fill="#d0d0d0"/>
<path d="M217.400 423V430.600L223.600 426.800Z" fill="#d0d0d0"/><path d="M227 424.600L229.200 426.800L227 429L224.800 426.800Z" fill="none" stroke="#d0d0d0" stroke-width=".9"/>
<path d="M237.400 422.600V431L244 426.800Z" fill="#d0d0d0"/><path d="M245.400 422.800V430.800" stroke="#d0d0d0" stroke-width="1.300"/>
<path d="M259.600 425.400V423.600H268.400M270 428.200V430H261.200" fill="none" stroke="#dfe2fa" stroke-width="1.200"/><path d="M267.600 421.600L270.200 423.600L267.600 425.600ZM262 428L259.400 430L262 432Z" fill="#dfe2fa"/>
<path d="M273 432.8V435H270.8Z" fill="#c8c8e0"/>
<text x="282.200" y="426.200" font-size="6.400" fill="#dfe2fa" text-anchor="middle">A</text><path d="M276.400 430.600H288" stroke="#dfe2fa" stroke-width="2" stroke-dasharray="1.300 .9 1.300 .9 1.300 .9 3.400 0"/>
<path d="M290.3 432.8V435H288.1Z" fill="#c8c8e0"/>
<path d="M294.200 424.800H296.400L299.600 422V431.600L296.400 428.800H294.200Z" fill="#d0d0d0"/><path d="M301.200 424.200A3.400 3.400 0 0 1 301.200 429.400M302.800 422.400A5.800 5.800 0 0 1 302.800 431.200" fill="none" stroke="#d0d0d0" stroke-width=".9"/>
<rect x="315" y="421.3" width="45.8" height="11.2" fill="#1c1c1c" rx="1.5"/>
<text class="f" x="338.200" y="429.500">76 F</text>
<circle cx="376.200" cy="426.800" r="4.600" fill="none" stroke="#6e3434" stroke-width="1.100"/><path d="M374.200 426.800L376.200 424.800L378.200 426.800L376.200 428.800Z" fill="none" stroke="#6e3434" stroke-width=".9"/>
<circle cx="394.600" cy="426.800" r="5.700" fill="#e84a54"/><text x="394.600" y="430" font-size="9" font-weight="bold" fill="#fff" text-anchor="middle">A</text>
<circle cx="412" cy="426.800" r="5.700" fill="#e2e2e2"/>
<g transform="translate(412 426.8)"><rect x="-0.65" y="-3.6" width="1.3" height="2.4" fill="#333" transform="rotate(0.0)"/><rect x="-0.65" y="-3.6" width="1.3" height="2.4" fill="#333" transform="rotate(45.0)"/><rect x="-0.65" y="-3.6" width="1.3" height="2.4" fill="#333" transform="rotate(90.0)"/><rect x="-0.65" y="-3.6" width="1.3" height="2.4" fill="#333" transform="rotate(135.0)"/><rect x="-0.65" y="-3.6" width="1.3" height="2.4" fill="#333" transform="rotate(180.0)"/><rect x="-0.65" y="-3.6" width="1.3" height="2.4" fill="#333" transform="rotate(225.0)"/><rect x="-0.65" y="-3.6" width="1.3" height="2.4" fill="#333" transform="rotate(270.0)"/><rect x="-0.65" y="-3.6" width="1.3" height="2.4" fill="#333" transform="rotate(315.0)"/><circle r="2.5" fill="#333"/><circle r="1.1" fill="#e2e2e2"/></g>
<path d="M384.2 432.8V435H382Z" fill="#999"/>
<circle cx="436.400" cy="426.800" r="5.500" fill="#dcdcdc"/><rect x="434" y="423" width="4.800" height="7.600" rx="2.200" fill="#444"/><path d="M436.400 423V426.200M434 426.200H438.800" stroke="#ececec" stroke-width=".6"/>
<path d="M457.800 423.200A5.400 5.400 0 1 1 451.600 422" fill="none" stroke="#dedede" stroke-width="1.200"/><circle cx="453.800" cy="427.200" r="1.800" fill="none" stroke="#dedede" stroke-width=".9"/><path d="M455 426L458.400 422.400" stroke="#dedede" stroke-width="1"/>
<path d="M477 424.40000000000003L479.4 426.8L477 429.2L474.6 426.8Z" fill="none" stroke="#d0d0d0" stroke-width="0.9"/>
<path d="M475.400 422.200L477 420.600L478.600 422.200M475.400 431.400L477 433L478.600 431.400M472.400 425.200L470.800 426.800L472.400 428.400M481.600 425.200L483.200 426.800L481.600 428.400" fill="none" stroke="#d0d0d0" stroke-width="1"/>
<path d="M494.5 424.6L496.7 426.8L494.5 429.0L492.3 426.8Z" fill="none" stroke="#d0d0d0" stroke-width="0.9"/>
<path d="M490 429.800A5.400 5.400 0 0 1 496.600 421.800M499 423.800A5.400 5.400 0 0 1 492.400 431.800" fill="none" stroke="#d0d0d0" stroke-width="1.200"/>
<path d="M506.600 424.600V421.800H517.400V432.400H514.400" fill="none" stroke="#d0d0d0" stroke-width="1.200"/>
<path d="M509.8 426.4L512.4 429L509.8 431.6L507.2 429Z" fill="none" stroke="#d0d0d0" stroke-width="0.9"/>
<rect x="524.200" y="422.400" width="10.800" height="3.600" rx="1.800" fill="#d0d0d0"/><rect x="524.200" y="427.800" width="10.800" height="3.600" rx="1.800" fill="#d0d0d0"/><circle cx="526.200" cy="424.200" r="1" fill="#3b3b3b"/><circle cx="533" cy="429.600" r="1" fill="#3b3b3b"/>
<path d="M542.600 422.200L552 431.600M551.800 422L548.600 425.200M545.600 428.400L544 430" stroke="#dfe2fa" stroke-width="1.200" fill="none"/><circle cx="543.600" cy="430.800" r="1.600" fill="#dfe2fa"/><path d="M542.400 421.600L545 421.800L542.800 424Z" fill="#dfe2fa"/>
<path d="M641.400 421.400V432.400H652" fill="none" stroke="#e4e4e4" stroke-width="1.300"/><path d="M641.600 432.200L650.400 423.200" stroke="#e4e4e4" stroke-width="1.300"/><path d="M640 422.800L641.400 421L642.800 422.800M650.600 431L652.400 432.400L650.600 433.800" fill="none" stroke="#e4e4e4" stroke-width=".8"/>
<path d="M31.90 449.100H655" stroke="#a4a4a4" stroke-width="1.100" stroke-dasharray="1.400 3.295"/>
<g class="t">
<text x="37.3" y="443.400">0</text>
<text x="84.2" y="443.400">10</text>
<text x="131.2" y="443.400">20</text>
<text x="178.2" y="443.400">30</text>
<text x="225.1" y="443.400">40</text>
<text x="272.1" y="443.400">50</text>
<text x="319.0" y="443.400">60</text>
<text x="366.0" y="443.400">70</text>
<text x="412.9" y="443.400">80</text>
<text x="459.9" y="443.400">90</text>
<text x="506.8" y="443.400">100</text>
<text x="553.8" y="443.400">110</text>
<text x="600.7" y="443.400">120</text>
<text x="647.6" y="443.400">130</text>
</g>
<path d="M37.3 444V450" stroke="#b4b4b4" stroke-width=".8"/>
<path d="M154.7 437.5V450" stroke="#b4b4b4" stroke-width=".8"/>
<path d="M272.1 443.5V450" stroke="#b4b4b4" stroke-width=".8"/>
<path d="M506.8 443V450" stroke="#b4b4b4" stroke-width=".8"/>
<path d="M624.2 437.5V450" stroke="#b4b4b4" stroke-width=".8"/>
<rect x="392" y="437.5" width="4.8" height="9.7" fill="#6c74d8"/>
<path d="M393 438.600h2.600M393 440.800h2.600M393 443h2.600" stroke="#9aa0ee" stroke-width=".6"/>
<text x="401.200" y="443.800" font-size="7" fill="#6a78c8" text-anchor="middle">76</text>
<rect x="28.7" y="453" width="45.8" height="9.8" fill="#1d1d1d" rx="1.5"/>
<text class="f" x="51.400" y="460.500">0 F</text>
<rect x="80" y="453" width="525.5" height="10.2" fill="#3b3b3b" rx="1.5"/>
<rect x="83.5" y="454.5" width="1" height="7" fill="#4a4a4a"/>
<rect x="600.5" y="454.5" width="1" height="7" fill="#4a4a4a"/>
<text class="f" x="93.800" y="460.500">0 F</text><text class="f" x="586.400" y="460.500">130 F</text>
<rect x="610" y="453" width="45.8" height="9.8" fill="#1d1d1d" rx="1.5"/>
<text class="f" x="632.600" y="460.500">130 F</text>
<rect x="0" y="465.4" width="683" height="4.6" fill="#1f1f1f"/>
<rect x="0" y="468" width="10.5" height="2" fill="#5a5a5a"/>
<circle cx="22.600" cy="470.200" r="2" fill="#d8453e"/>
<g opacity=".3" fill="#fff" stroke="#fff" stroke-linejoin="round"><text transform="translate(399.500 441.600) scale(.93 1.070)" font-family="'Liberation Sans','DejaVu Sans',sans-serif" font-weight="bold" font-size="29.500" text-anchor="middle" stroke-width="1.800">مستقل</text><text x="351.900" y="457.800" font-size="17" textLength="96" lengthAdjust="spacingAndGlyphs" stroke-width=".5">mostaql.com</text></g>
<!-- title -->
<text class="big" transform="translate(741.600 0) scale(.965 1)"><tspan x="0" y="79.8">T</tspan><tspan x="0" y="125.9">e</tspan><tspan x="0" y="174">x</tspan><tspan x="0" y="221.1">u</tspan><tspan x="0" y="268.1">r</tspan><tspan x="0" y="314.4">i</tspan><tspan x="0" y="361.4">n</tspan><tspan x="0" y="408.1">g</tspan></text>
</svg>
</body></html>
